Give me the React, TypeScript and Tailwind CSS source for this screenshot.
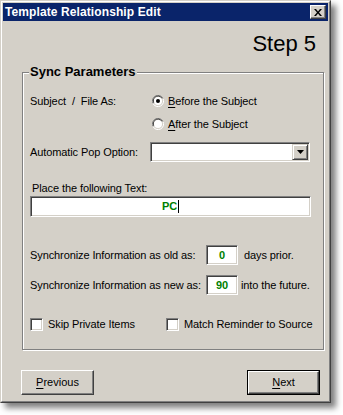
import React from 'react';

const font = { fontFamily: '"Liberation Sans", Arial, sans-serif' };

const Sunken = ({ className = '', children }: { className?: string; children?: React.ReactNode }) => (
    <div
        className={`border border-[#808080] border-r-white border-b-white shadow-[inset_1px_1px_0_#404040,inset_-1px_-1px_0_#d4d0c8] bg-white ${className}`}
    >
        {children}
    </div>
);

const Radio = ({ checked }: { checked?: boolean }) => (
    <svg width="12" height="12" viewBox="0 0 12 12" className="shrink-0">
        <path d="M11 3.5 A5.5 5.5 0 0 0 3.5 1 A5.5 5.5 0 0 0 1 8.5" fill="none" stroke="#808080" />
        <path d="M10 3.5 A4.5 4.5 0 0 0 3 2.2 A4.5 4.5 0 0 0 2 8" fill="none" stroke="#404040" />
        <path d="M1 8.5 A5.5 5.5 0 0 0 8.5 11 A5.5 5.5 0 0 0 11 3.5" fill="none" stroke="#ffffff" />
        <circle cx="6" cy="6" r="4" fill="#ffffff" />
        {checked && <circle cx="6" cy="6" r="2" fill="#000000" />}
    </svg>
);

const Check = () => <Sunken className="w-[13px] h-[13px] shrink-0" />;

const RaisedBtn = ({ label, hot, isDefault }: { label: string; hot: string; isDefault?: boolean }) => (
    <div className={`w-[73px] h-[25px] ${isDefault ? 'border border-black' : ''}`}>
        <div className="size-full flex items-center justify-center bg-[#d4d0c8] border border-white border-r-[#404040] border-b-[#404040] shadow-[inset_-1px_-1px_0_#808080] text-[11px] text-black">
            <span>
                <span className="underline underline-offset-2">{hot}</span>
                {label.slice(1)}
            </span>
        </div>
    </div>
);

export default function App() {
    return (
        <div className="w-[343px] h-[415px] bg-white" style={font}>
            <div className="w-[331px] h-[403px] border border-[#d4d0c8] border-r-[#404040] border-b-[#404040] shadow-[5px_5px_6px_rgba(0,0,0,0.5)]">
                <div className="size-full flex flex-col bg-[#d4d0c8] border border-white border-r-[#808080] border-b-[#808080] p-px">
                    {/* title bar */}
                    <div className="h-[18px] bg-[#0a246a] flex items-center justify-between pl-[2px] pr-[2px]">
                        <span className="text-white font-bold text-[12px] tracking-[0.1px]">Template Relationship Edit</span>
                        <div className="w-[16px] h-[14px] bg-[#d4d0c8] border border-white border-r-[#404040] border-b-[#404040] shadow-[inset_-1px_-1px_0_#808080] flex items-center justify-center">
                            <svg width="8" height="7" viewBox="0 0 8 7">
                                <path d="M0 0h2l2 2.5L6 0h2L5 3.5 8 7H6L4 4.5 2 7H0l3-3.5z" fill="#000" />
                            </svg>
                        </div>
                    </div>

                    <div className="mt-[10px] pr-[12px] text-right text-[22px] leading-[26px] text-black">Step 5</div>

                    <fieldset className="mt-[7px] ml-[19px] w-[302px] h-[286px] border border-[#808080] shadow-[inset_1px_1px_0_#fff,1px_1px_0_#fff] pl-[7px] text-[11px] tracking-[-0.1px] text-black">
                        <legend className="-ml-px px-px bg-[#d4d0c8] font-bold text-[13px] leading-[16px] tracking-normal">Sync Parameters</legend>

                        <div className="mt-[13px] flex">
                            <div className="w-[122px] h-[16px] flex items-center">Subject&nbsp; /&nbsp; File As:</div>
                            <div className="flex flex-col gap-[7px]">
                                <div className="h-[16px] flex items-center gap-[4px]">
                                    <Radio checked />
                                    <span>
                                        <span className="underline underline-offset-2">B</span>efore the Subject
                                    </span>
                                </div>
                                <div className="h-[16px] flex items-center gap-[4px]">
                                    <Radio />
                                    <span>
                                        <span className="underline underline-offset-2">A</span>fter the Subject
                                    </span>
                                </div>
                            </div>
                        </div>

                        <div className="mt-[10px] flex items-center">
                            <div className="w-[120px]">Automatic Pop Option:</div>
                            <Sunken className="w-[160px] h-[20px] flex justify-end items-center pr-px">
                                <div className="w-[16px] h-[16px] bg-[#d4d0c8] border border-[#d4d0c8] border-r-[#404040] border-b-[#404040] shadow-[inset_1px_1px_0_#fff,inset_-1px_-1px_0_#808080] flex items-center justify-center">
                                    <svg width="7" height="4" viewBox="0 0 7 4">
                                        <path d="M0 0h7L3.5 4z" fill="#000" />
                                    </svg>
                                </div>
                            </Sunken>
                        </div>

                        <div className="mt-[19px] h-[14px] pl-[2px] leading-[14px]">Place the following Text:</div>
                        <Sunken className="mt-[1px] w-[281px] h-[21px] flex items-center justify-center">
                            <span className="font-bold text-[#008000]">PC</span>
                            <span className="w-px h-[13px] bg-black ml-px" />
                        </Sunken>

                        <div className="mt-[28px] flex items-center h-[20px]">
                            <div className="w-[176px]">Synchronize Information as old as:</div>
                            <Sunken className="w-[32px] h-[20px] flex items-center justify-center font-bold text-[#008000]">0</Sunken>
                            <span className="ml-[6px]">days prior.</span>
                        </div>

                        <div className="mt-[10px] flex items-center h-[20px]">
                            <div className="w-[176px]">Synchronize Information as new as:</div>
                            <Sunken className="w-[32px] h-[20px] flex items-center justify-center font-bold text-[#008000]">90</Sunken>
                            <span className="ml-[3px]">into the future.</span>
                        </div>

                        <div className="mt-[22px] flex items-center h-[14px]">
                            <div className="w-[136px] flex items-center gap-[5px]">
                                <Check />
                                <span>Skip Private Items</span>
                            </div>
                            <div className="flex items-center gap-[5px]">
                                <Check />
                                <span>Match Reminder to Source</span>
                            </div>
                        </div>
                    </fieldset>

                    <div className="mt-[20px] ml-[18px] mr-[8px] flex justify-between">
                        <RaisedBtn label="Previous" hot="P" />
                        <RaisedBtn label="Next" hot="N" isDefault />
                    </div>
                </div>
            </div>
        </div>
    );
}
